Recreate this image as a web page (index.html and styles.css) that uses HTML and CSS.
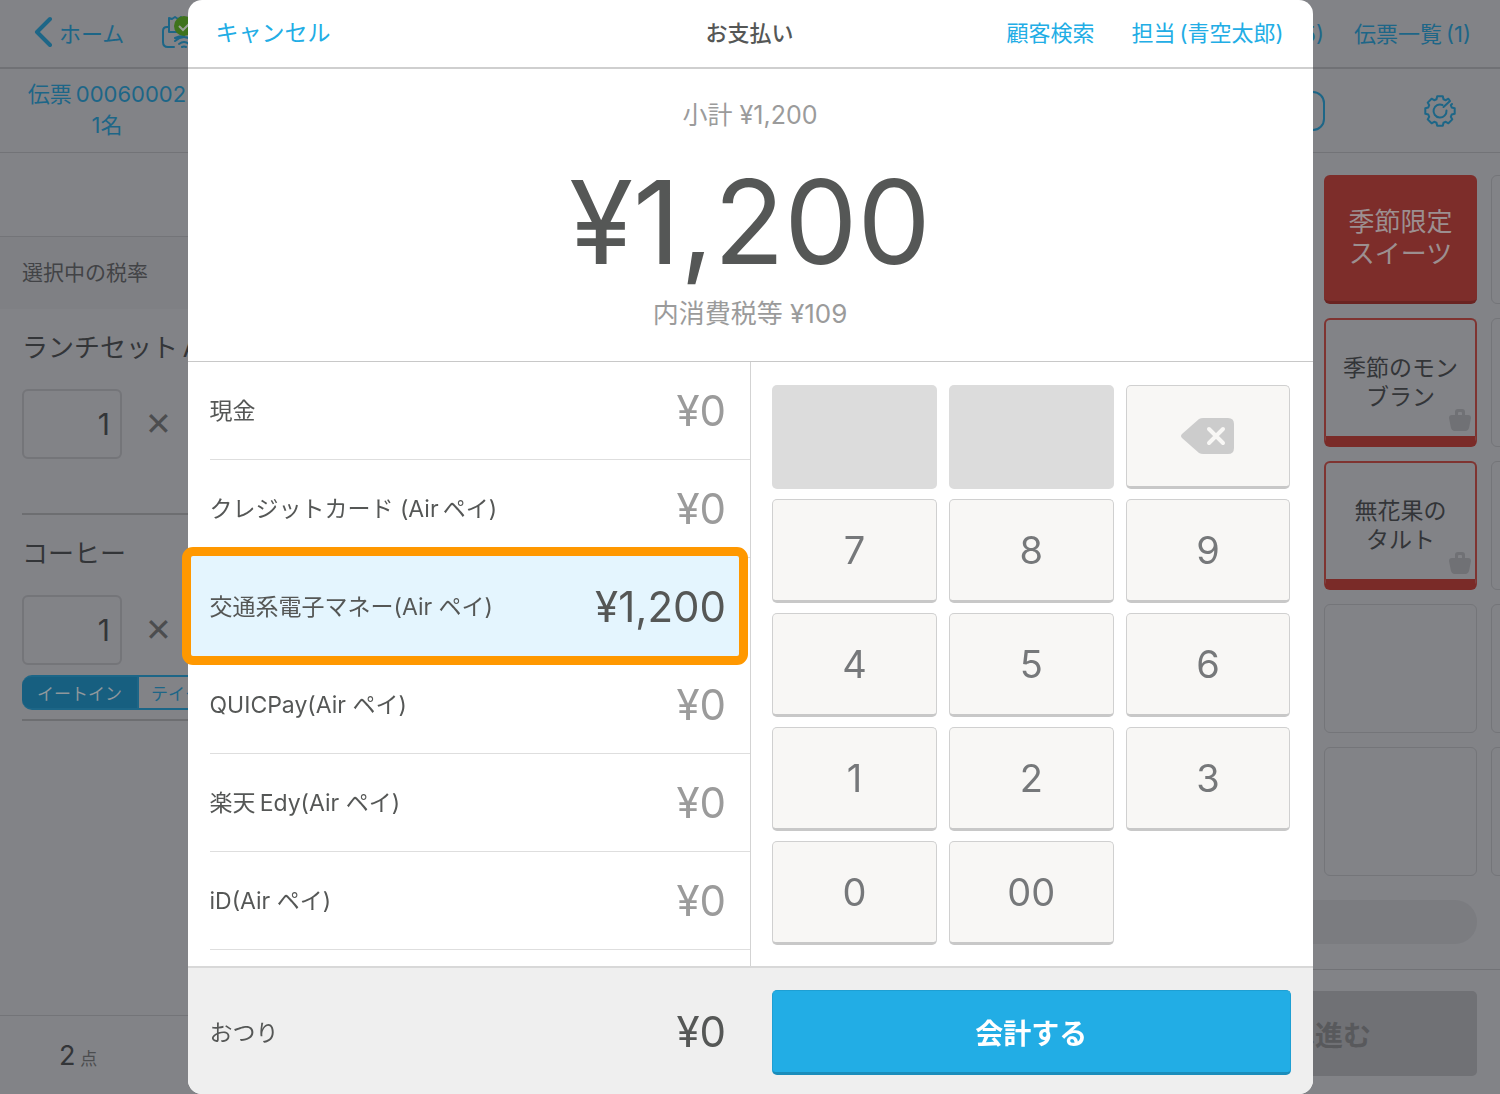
FILE: index.html
```html
<!DOCTYPE html>
<html lang="ja">
<head>
<meta charset="utf-8">
<meta name="viewport" content="width=device-width, initial-scale=1">
<title>お支払い</title>
<link rel="stylesheet" href="styles.css">
</head>
<body>
<div class="register">
  <header class="topbar">
    <a class="topbar-home" href="#">
      <svg width="18" height="32" viewBox="0 0 18 32" aria-hidden="true"><path d="M16 3 3 16l13 13" fill="none" stroke="currentColor" stroke-width="4" stroke-linecap="round" stroke-linejoin="round"/></svg>
      ホーム
    </a>
    <svg class="printer" width="42" height="34" viewBox="0 0 42 34" aria-hidden="true">
      <g fill="none" stroke="currentColor" stroke-width="2" stroke-linecap="round" stroke-linejoin="round">
        <path d="M6 12H5q-4 0-4 4v11q0 5 5 5h6M7 17V3l3 1 3-2 3 2 3-2M7 17h10"/>
        <path d="M13 26q9-8 18 0M17 29q5-4 10 0M20 32q2-1 4 0M13 23q4-2 9-2"/>
      </g>
      <circle cx="22" cy="11" r="10" fill="#3f731c"/>
      <path d="m17 11 4 4 7-7" fill="none" stroke="#9aa297" stroke-width="2"/>
    </svg>
    <nav class="topbar-links">
      <a href="#">(5)</a>
      <a href="#">伝票一覧&thinsp;(1)</a>
    </nav>
  </header>
  <div class="subbar">
    <a class="slip" href="#"><span>伝票&thinsp;00060002</span><span>1名</span></a>
    <div class="subbar-tools">
      <button class="tab-box" type="button" aria-label="表示切替"></button>
      <button class="gear" type="button" aria-label="設定">
        <svg width="32" height="32" viewBox="0 0 32 32" fill="none" stroke="currentColor" stroke-width="2" stroke-linejoin="round" stroke-linecap="round" aria-hidden="true">
          <path d="M28 9 26.800 10.200 27.700 12.500 30.700 13.200V18.800L27.700 19.500 26.800 21.800 28.300 24.400 24.400 28.300 21.800 26.800 19.500 27.700 18.800 30.700H13.200L12.500 27.700 10.200 26.800 7.600 28.300 3.700 24.400 5.200 21.800 4.300 19.500 1.300 18.800V13.200L4.300 12.500 5.200 10.200 3.700 7.600 7.600 3.700 10.200 5.200 12.500 4.300 13.200 1.300H18.800L19.500 4.300 21.800 5.200 24.400 3.700 26 6 19.500 12"/>
          <path d="M22.500 15.500A6.500 6.500 0 1 1 18.500 10"/>
        </svg>
      </button>
    </div>
  </div>
  <div class="workspace">
    <section class="ticket">
      <div class="ticket-blank"></div>
      <h2 class="ticket-rate">選択中の税率</h2>
      <article class="item">
        <h3>ランチセット&thinsp;A</h3>
        <div class="item-qty"><input type="text" value="1" aria-label="ランチセット 数量"><span>✕</span></div>
      </article>
      <article class="item">
        <h3>コーヒー</h3>
        <div class="item-qty"><input type="text" value="1" aria-label="コーヒー 数量"><span>✕</span></div>
        <div class="segment"><button class="segment-on" type="button">イートイン</button><button type="button">テイク</button></div>
      </article>
      <footer class="ticket-total"><strong>2</strong> 点</footer>
    </section>
    <section class="shop">
      <div class="catalog">
        <div class="catalog-page">
          <button class="tile tile--category" type="button">季節限定<br>スイーツ</button>
          <button class="tile tile--product" type="button">季節のモン<br>ブラン
            <svg class="bag" width="22" height="22" viewBox="0 0 22 22" aria-hidden="true"><path d="M6 6V3q0-3 3-3h4q3 0 3 3v3h3q3 0 3 3l-2 10q-1 3-3 3H5q-2 0-3-3L0 9Q0 6 3 6ZM9 6h4V4q0-1-1-1h-2Q9 3 9 4Z" fill="currentColor" fill-rule="evenodd"/></svg>
          </button>
          <button class="tile tile--product" type="button">無花果の<br>タルト
            <svg class="bag" width="22" height="22" viewBox="0 0 22 22" aria-hidden="true"><path d="M6 6V3q0-3 3-3h4q3 0 3 3v3h3q3 0 3 3l-2 10q-1 3-3 3H5q-2 0-3-3L0 9Q0 6 3 6ZM9 6h4V4q0-1-1-1h-2Q9 3 9 4Z" fill="currentColor" fill-rule="evenodd"/></svg>
          </button>
          <div class="tile"></div>
          <div class="tile"></div>
        </div>
        <div class="catalog-page catalog-page--next">
          <div class="tile"></div><div class="tile"></div><div class="tile"></div><div class="tile"></div><div class="tile"></div>
        </div>
      </div>
      <div class="pager"></div>
      <footer class="shop-footer"><button type="button" disabled>会計へ進む</button></footer>
    </section>
  </div>
</div>

<main class="payment" role="dialog" aria-labelledby="payment-title">
  <header class="payment-header">
    <a href="#">キャンセル</a>
    <h1 id="payment-title">お支払い</h1>
    <nav><a href="#">顧客検索</a><a href="#">担当&thinsp;(青空太郎)</a></nav>
  </header>
  <section class="summary">
    <p class="summary-sub">小計 ¥1,200</p>
    <p class="summary-total">¥1,200</p>
    <p class="summary-tax">内消費税等 ¥109</p>
  </section>
  <div class="payment-body">
    <ul class="methods">
      <li><button type="button"><span>現金</span><b>¥0</b></button></li>
      <li><button type="button"><span>クレジットカード (Air&thinsp;ペイ)</span><b>¥0</b></button></li>
      <li class="is-selected"><button type="button"><span>交通系電子マネー(Air ペイ)</span><b>¥1,200</b></button></li>
      <li><button type="button"><span>QUICPay(Air ペイ)</span><b>¥0</b></button></li>
      <li><button type="button"><span>楽天&thinsp;Edy(Air ペイ)</span><b>¥0</b></button></li>
      <li><button type="button"><span>iD(Air ペイ)</span><b>¥0</b></button></li>
    </ul>
    <div class="keypad">
      <button class="key-off" type="button" disabled aria-label="未使用"></button>
      <button class="key-off" type="button" disabled aria-label="未使用"></button>
      <button type="button" aria-label="削除">
        <svg width="54" height="38" viewBox="0 0 54 38" aria-hidden="true"><path d="M18 2q2-1 4-1h25q6 0 6 6v24q0 6-6 6H22q-2 0-4-1L1 21q-2-2 0-4Z" fill="#ccc"/><path d="m28 12 14 14m0-14L28 26" stroke="#f8f7f5" stroke-width="4" stroke-linecap="round"/></svg>
      </button>
      <button type="button">7</button><button type="button">8</button><button type="button">9</button>
      <button type="button">4</button><button type="button">5</button><button type="button">6</button>
      <button type="button">1</button><button type="button">2</button><button type="button">3</button>
      <button type="button">0</button><button type="button">00</button>
    </div>
  </div>
  <footer class="payment-footer">
    <div class="change"><span>おつり</span><b>¥0</b></div>
    <div class="checkout"><button type="button">会計する</button></div>
  </footer>
</main>
</body>
</html>
```
FILE: styles.css
```css
* { box-sizing: border-box; }

body {
  margin: 0;
  font-family: Inter, "Noto Sans CJK JP", sans-serif;
  font-size: 22px;
  background: #828387;
  color: #333538;
}

h1, h2, h3, p, ul { margin: 0; padding: 0; font-weight: 400; }
ul { list-style: none; }
a { color: inherit; text-decoration: none; white-space: nowrap; }
button, input { font: inherit; color: inherit; border: 0; padding: 0; background: none; }
b { font-weight: 400; }

/* Register screen, dimmed behind the dialog */
.register {
  display: flex;
  flex-direction: column;
  min-height: 100vh;
}

.topbar {
  display: flex;
  align-items: center;
  height: 69px;
  padding: 0 29px 4px 34px;
  border-bottom: 2px solid #707175;
  color: #1d6687;
}
.topbar-home { display: flex; align-items: center; gap: 7px; }
.printer { margin-left: 38px; }
.topbar-links { display: flex; align-items: baseline; gap: 30px; margin-left: auto; }

.subbar {
  display: flex;
  height: 84px;
  border-bottom: 1px solid #727377;
  color: #1d6687;
}
.slip {
  display: flex;
  flex-direction: column;
  width: 214px;
  padding-top: 10px;
  text-align: center;
  line-height: 31px;
}
.subbar-tools {
  display: flex;
  flex: 1;
  justify-content: flex-end;
  align-items: center;
  gap: 99px;
  padding-right: 44px;
}
.tab-box {
  width: 200px;
  height: 40px;
  border: 2px solid #1d6687;
  border-radius: 12px;
}
.gear { display: flex; }

.workspace { display: flex; flex: 1; }
.ticket { display: flex; flex-direction: column; width: 40%; }
.ticket-blank { height: 84px; border-bottom: 1px solid #737478; }
.ticket-rate {
  height: 72px;
  padding-left: 22px;
  background: #7f8084;
  color: #424346;
  font-size: 21px;
  line-height: 72px;
}
.item {
  height: 206px;
  margin-left: 22px;
  padding-top: 20px;
  border-bottom: 2px solid #6d6e71;
}
.item h3 { font-size: 26px; line-height: 38px; }
.item-qty {
  display: flex;
  align-items: center;
  gap: 23px;
  margin-top: 22px;
}
.item-qty input {
  width: 100px;
  height: 70px;
  padding-right: 10px;
  border: 2px solid #747579;
  border-radius: 6px;
  font-size: 30px;
  text-align: right;
}
.item-qty span { font-size: 32px; line-height: 38px; color: #4c4d4f; }
.segment { display: flex; margin-top: 10px; }
.segment button {
  height: 35px;
  padding: 0 12px;
  border: 2px solid #1d6687;
  border-left: 0;
  color: #1d6687;
  font-size: 17px;
}
.segment .segment-on {
  width: 117px;
  padding: 0;
  border-radius: 10px 0 0 10px;
  background: #175f80;
  color: #8f979c;
}
.ticket-total {
  height: 79px;
  margin-top: auto;
  padding-left: 59px;
  border-top: 1px solid #737478;
  color: #4c4d4f;
  font-size: 17px;
  line-height: 79px;
}
.ticket-total strong { font-size: 27px; font-weight: 400; color: #333538; }

.shop { display: flex; flex: 1; flex-direction: column; min-width: 0; }
.catalog { display: flex; gap: 14px; padding-top: 22px; overflow: hidden; }
.catalog-page {
  display: grid;
  flex: 0 0 calc(100% - 23px);
  grid-template-columns: 153px;
  grid-auto-rows: 129px;
  gap: 14px;
  justify-content: end;
}
.catalog-page--next { flex-basis: 153px; }
.tile {
  position: relative;
  border: 1px solid #747579;
  border-radius: 6px;
  font-size: 23px;
  line-height: 29px;
}
.tile--category {
  border: 0;
  border-bottom: 3px solid #6a2422;
  background: #7d2d2a;
  color: #9c8f90;
  font-size: 26px;
  line-height: 32px;
}
.tile--product {
  padding-top: 9px;
  border: 2px solid #7f3431;
  border-bottom: 11px solid #7a2b28;
}
.bag { position: absolute; right: 4px; bottom: 5px; color: #707175; }
.pager {
  height: 44px;
  margin: 24px 23px 25px 0;
  border-radius: 22px;
  background: #7b7c80;
}
.shop-footer {
  display: flex;
  flex: 1;
  justify-content: flex-end;
  padding: 21px 23px 18px 0;
  border-top: 1px solid #717276;
}
.shop-footer button {
  width: 352px;
  height: 85px;
  border-radius: 5px;
  background: #707175;
  color: #58595c;
  font-size: 28px;
  font-weight: 700;
}

/* Payment dialog */
.payment {
  position: fixed;
  inset: 0;
  display: flex;
  flex-direction: column;
  width: 75%;
  margin: 0 auto;
  border-radius: 14px;
  background: #fff;
  color: #555756;
}
.payment-header {
  display: grid;
  grid-template-columns: 1fr auto 1fr;
  align-items: center;
  height: 69px;
  padding: 0 29px 5px 28px;
  border-bottom: 2px solid #cfcfcf;
}
.payment-header a { color: #22ade5; }
.payment-header > a { font-size: 23px; }
.payment-header h1 { font-size: 22px; font-weight: 500; }
.payment-header nav { display: flex; gap: 37px; justify-content: flex-end; }

.summary {
  height: 293px;
  padding-top: 28px;
  border-bottom: 1px solid #c8c8c8;
  text-align: center;
  color: #9b9b9b;
}
.summary-sub { font-size: 25px; line-height: 36px; }
.summary-total { margin: 25px 0 10px; color: #555756; font-size: 116px; line-height: 128px; }
.summary-tax { font-size: 26px; line-height: 36px; }

.payment-body { display: flex; flex: 1; min-height: 0; }
.methods { width: calc(50% + 1px); border-right: 1px solid #d3d3d3; }
.methods li { position: relative; height: 98px; padding-left: 22px; }
.methods button {
  position: relative;
  display: flex;
  align-items: center;
  justify-content: space-between;
  width: 100%;
  height: 98px;
  padding-right: 24px;
  border-bottom: 1px solid #dedede;
  font-size: 23px;
}
.methods span { padding-bottom: 3px; }
.methods b, .change b { font-size: 42px; }
.methods b { color: #9b9b9b; }
.methods .is-selected b { color: #555756; }
.methods .is-selected button { border-bottom-color: transparent; }
.is-selected::before {
  content: "";
  position: absolute;
  inset: -11px 2px -9px -6px;
  border: 9px solid #ff9800;
  border-radius: 11px;
  background: #e4f5fe;
}

.keypad {
  display: grid;
  flex: 1;
  grid-template-columns: repeat(3, 1fr);
  grid-auto-rows: 104px;
  gap: 10px 12px;
  padding: 23px 22px 0 21px;
}
.keypad button {
  display: flex;
  align-items: center;
  justify-content: center;
  border: 1px solid #d0d0d0;
  border-bottom: 3px solid #c8c8c8;
  border-radius: 5px;
  background: #f8f7f5;
  color: #76787a;
  font-size: 38px;
}
.keypad .key-off { border: 0; background: #dcdcdc; }

.payment-footer {
  display: flex;
  height: 128px;
  border-top: 2px solid #d8d8d8;
  border-radius: 0 0 14px 14px;
  background: #efefef;
}
.change {
  display: flex;
  align-items: center;
  justify-content: space-between;
  width: 50%;
  padding: 0 24px 0 22px;
}
.change span { font-size: 23px; }
.checkout { flex: 1; padding: 22px 22px 0 22px; }
.checkout button {
  width: 100%;
  height: 85px;
  border: 1px solid #1e9fd3;
  border-bottom: 3px solid #1b8dbb;
  border-radius: 5px;
  background: #22ade5;
  color: #fff;
  font-size: 28px;
  font-weight: 700;
}
```
